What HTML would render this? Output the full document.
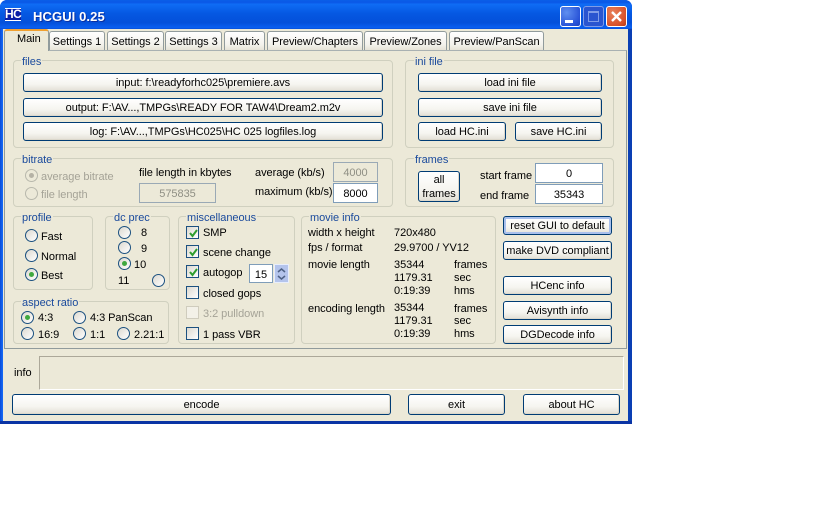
<!DOCTYPE html>
<html><head><meta charset="utf-8"><style>
html,body{margin:0;padding:0;width:840px;height:525px;background:#fff;overflow:hidden}
body{font-family:"Liberation Sans",sans-serif;font-size:11px;letter-spacing:-.05px;color:#000;position:relative}
div,span{position:absolute;box-sizing:border-box}
.t{line-height:16px;white-space:nowrap;height:14px}
.g{border:1px solid #d0d0bf;border-radius:4px}
.l{line-height:15px;height:14px;color:#1a4a9c;background:#ece9d8;padding:0 1px;white-space:nowrap}
.b{border:1px solid #003c74;border-radius:3px;background:linear-gradient(#fff,#f6f5f0 60%,#e2dfd5);text-align:center;white-space:nowrap;line-height:19px;box-shadow:inset -1px -1px 0 #dcd8cc}
.e{border:1px solid #7f9db9;background:#fff;text-align:center;line-height:20px}
.d{background:#ece9d8;color:#8f8f84;border-color:#9aa9b5}
.r{width:13px;height:13px;border-radius:50%;border:1px solid #1c5180;background:linear-gradient(135deg,#dcd9d0,#fff)}
.r.on:after{content:"";position:absolute;left:3px;top:3px;width:5px;height:5px;border-radius:50%;background:#3fa83f}
.r.off{border-color:#b8b8ac;background:#ece9d8}
.r.off.on:after{background:#b5b2a5}
.c{width:13px;height:13px;border:1px solid #1c5180;background:linear-gradient(135deg,#dcd9d0,#fff)}
.c svg{position:absolute;left:1px;top:1px}
.c.off{border-color:#cfccbd;background:#f3f1e8}
.tab{border:1px solid #919b9c;border-bottom:none;border-radius:3px 3px 0 0;background:linear-gradient(#fff,#f3f2ec 70%,#e6e3d6);text-align:center;top:31px;height:19px;line-height:20px;white-space:nowrap}
.dis{color:#a5a397}
</style></head><body>
<!-- window -->
<div style="left:0;top:0;width:632px;height:424px;background:#0831d9;border-radius:7px 7px 0 0"></div>
<div style="left:0;top:0;width:632px;height:30px;border-radius:7px 7px 0 0;background:linear-gradient(#0a5ee8,#0a58e6 8%,#0f6cf5 14%,#0558e2 45%,#0450da 75%,#0a5ff0 92%,#0644c8)"></div>
<div style="left:0;top:29px;width:3px;height:395px;background:linear-gradient(90deg,#0a4bd8,#166cf8)"></div>
<div style="left:628px;top:29px;width:4px;height:395px;background:#0a3fb4"></div>
<div style="left:0;top:421px;width:632px;height:3px;background:#0a34a4"></div>
<div style="left:3px;top:29px;width:625px;height:392px;background:#ece9d8"></div>
<!-- title -->
<div style="left:5px;top:8px;width:16px;height:13px;background:#0a1ea8;border-top:1px solid #fff;border-bottom:1px solid #fff;color:#fff;font:bold 12px/11px 'Liberation Sans',sans-serif;text-align:center;letter-spacing:-.5px">HC</div>
<div class="t" style="left:33px;top:9px;height:16px;line-height:16px;color:#fff;font-weight:bold;font-size:13px;letter-spacing:.1px;text-shadow:1px 1px 0 #0a2fa0">HCGUI 0.25</div>
<div style="left:560px;top:6px;width:21px;height:21px;border:1px solid #fff;border-radius:3px;background:radial-gradient(circle at 30% 30%,#5f8ff0,#2a55d8 70%,#1d42c0)"><span style="left:4px;top:13px;width:8px;height:3px;background:#fff"></span></div>
<div style="left:583px;top:6px;width:21px;height:21px;border:1px solid #7f9ce8;border-radius:3px;background:#2a55d0"><span style="left:4px;top:4px;width:11px;height:11px;border:1px solid #7f9ce8;border-top-width:2px"></span></div>
<div style="left:606px;top:6px;width:21px;height:21px;border:1px solid #fff;border-radius:3px;background:radial-gradient(circle at 30% 30%,#e8805a,#d8522a 70%,#b83a18)"><svg width="19" height="19" style="position:absolute;left:0;top:0"><path d="M5 5L14 14M14 5L5 14" stroke="#fff" stroke-width="2.4"/></svg></div>
<!-- tab panel -->
<div style="left:4px;top:50px;width:623px;height:299px;border:1px solid #919b9c;border-top-color:#a9b1b2;background:#ece9d8"></div>
<div class="tab" style="left:49px;width:56px">Settings 1</div>
<div class="tab" style="left:107px;width:57px">Settings 2</div>
<div class="tab" style="left:165px;width:57px">Settings 3</div>
<div class="tab" style="left:224px;width:41px">Matrix</div>
<div class="tab" style="left:267px;width:96px">Preview/Chapters</div>
<div class="tab" style="left:364px;width:83px">Preview/Zones</div>
<div class="tab" style="left:449px;width:95px">Preview/PanScan</div>
<div style="left:4px;top:29px;width:45px;height:22px;border:1px solid #919b9c;border-bottom:none;border-top:2px solid #f0a030;border-radius:3px 3px 0 0;background:#ece9d8"></div>
<div class="t" style="left:17px;top:31px">Main</div>
<!-- files -->
<div class="g" style="left:13px;top:60px;width:380px;height:88px"></div><div class="l" style="left:21px;top:55px">files</div>
<div class="b" style="left:23px;top:73px;width:360px;height:19px">input: f:\readyforhc025\premiere.avs</div>
<div class="b" style="left:23px;top:98px;width:360px;height:19px">output: F:\AV...,TMPGs\READY FOR TAW4\Dream2.m2v</div>
<div class="b" style="left:23px;top:122px;width:360px;height:19px">log: F:\AV...,TMPGs\HC025\HC 025 logfiles.log</div>
<!-- ini -->
<div class="g" style="left:405px;top:60px;width:209px;height:88px"></div><div class="l" style="left:414px;top:55px">ini file</div>
<div class="b" style="left:418px;top:73px;width:184px;height:19px">load ini file</div>
<div class="b" style="left:418px;top:98px;width:184px;height:19px">save ini file</div>
<div class="b" style="left:418px;top:122px;width:88px;height:19px">load HC.ini</div>
<div class="b" style="left:515px;top:122px;width:87px;height:19px">save HC.ini</div>
<!-- bitrate -->
<div class="g" style="left:13px;top:158px;width:380px;height:49px"></div><div class="l" style="left:21px;top:153px">bitrate</div>
<div class="r off on" style="left:25px;top:169px"></div><div class="t dis" style="left:41px;top:169px">average bitrate</div>
<div class="r off" style="left:25px;top:187px"></div><div class="t dis" style="left:41px;top:187px">file length</div>
<div class="t" style="left:139px;top:165px">file length in kbytes</div>
<div class="e d" style="left:139px;top:183px;width:77px;height:20px">575835</div>
<div class="t" style="left:255px;top:165px">average (kb/s)</div>
<div class="t" style="left:255px;top:184px">maximum (kb/s)</div>
<div class="e d" style="left:333px;top:162px;width:45px;height:20px">4000</div>
<div class="e" style="left:333px;top:183px;width:45px;height:20px">8000</div>
<!-- frames -->
<div class="g" style="left:405px;top:158px;width:209px;height:49px"></div><div class="l" style="left:414px;top:153px">frames</div>
<div class="b" style="left:418px;top:171px;width:42px;height:31px;white-space:normal;line-height:14px;padding-top:1px">all<br>frames</div>
<div class="t" style="left:480px;top:168px">start frame</div>
<div class="t" style="left:480px;top:188px">end frame</div>
<div class="e" style="left:535px;top:163px;width:68px;height:20px">0</div>
<div class="e" style="left:535px;top:184px;width:68px;height:20px">35343</div>
<!-- profile -->
<div class="g" style="left:13px;top:216px;width:80px;height:74px"></div><div class="l" style="left:21px;top:211px">profile</div>
<div class="r" style="left:25px;top:229px"></div><div class="t" style="left:41px;top:229px">Fast</div>
<div class="r" style="left:25px;top:249px"></div><div class="t" style="left:41px;top:249px">Normal</div>
<div class="r on" style="left:25px;top:268px"></div><div class="t" style="left:41px;top:268px">Best</div>
<!-- dc prec -->
<div class="g" style="left:105px;top:216px;width:65px;height:74px"></div><div class="l" style="left:113px;top:211px">dc prec</div>
<div class="r" style="left:118px;top:226px"></div><div class="t" style="left:141px;top:225px">8</div>
<div class="r" style="left:118px;top:241px"></div><div class="t" style="left:141px;top:241px">9</div>
<div class="r on" style="left:118px;top:257px"></div><div class="t" style="left:134px;top:257px">10</div>
<div class="t" style="left:118px;top:273px">11</div><div class="r" style="left:152px;top:274px"></div>
<!-- aspect -->
<div class="g" style="left:13px;top:301px;width:156px;height:43px"></div><div class="l" style="left:21px;top:296px">aspect ratio</div>
<div class="r on" style="left:21px;top:311px"></div><div class="t" style="left:38px;top:310px">4:3</div>
<div class="r" style="left:73px;top:311px"></div><div class="t" style="left:90px;top:310px">4:3 PanScan</div>
<div class="r" style="left:21px;top:327px"></div><div class="t" style="left:38px;top:327px">16:9</div>
<div class="r" style="left:73px;top:327px"></div><div class="t" style="left:90px;top:327px">1:1</div>
<div class="r" style="left:117px;top:327px"></div><div class="t" style="left:134px;top:327px">2.21:1</div>
<!-- misc -->
<div class="g" style="left:178px;top:216px;width:117px;height:128px"></div><div class="l" style="left:186px;top:211px">miscellaneous</div>
<div class="c" style="left:186px;top:226px"><svg width="11" height="11"><path d="M2 5L4.500 8L9 2" fill="none" stroke="#2f9e2f" stroke-width="2"/></svg></div><div class="t" style="left:203px;top:225px">SMP</div>
<div class="c" style="left:186px;top:245px"><svg width="11" height="11"><path d="M2 5L4.500 8L9 2" fill="none" stroke="#2f9e2f" stroke-width="2"/></svg></div><div class="t" style="left:203px;top:245px">scene change</div>
<div class="c" style="left:186px;top:265px"><svg width="11" height="11"><path d="M2 5L4.500 8L9 2" fill="none" stroke="#2f9e2f" stroke-width="2"/></svg></div><div class="t" style="left:203px;top:265px">autogop</div>
<div class="e" style="left:249px;top:264px;width:24px;height:19px">15</div>
<div style="left:274px;top:264px;width:15px;height:19px;background:#b4c4ec;border:1px solid #e8eefc"><svg width="13" height="17" style="position:absolute;left:0;top:0"><path d="M3 7L6.500 4L10 7M3 11L6.500 14L10 11" fill="none" stroke="#4d6185" stroke-width="1.500"/></svg></div>
<div class="c" style="left:186px;top:286px"></div><div class="t" style="left:203px;top:286px">closed gops</div>
<div class="c off" style="left:186px;top:306px"></div><div class="t dis" style="left:203px;top:306px">3:2 pulldown</div>
<div class="c" style="left:186px;top:327px"></div><div class="t" style="left:203px;top:327px">1 pass VBR</div>
<!-- movie info -->
<div class="g" style="left:301px;top:216px;width:195px;height:128px"></div><div class="l" style="left:309px;top:211px">movie info</div>
<div class="t" style="left:308px;top:225px">width x height</div><div class="t" style="left:394px;top:225px">720x480</div>
<div class="t" style="left:308px;top:240px">fps / format</div><div class="t" style="left:394px;top:240px">29.9700 / YV12</div>
<div class="t" style="left:308px;top:257px">movie length</div><div class="t" style="left:394px;top:257px">35344</div><div class="t" style="left:454px;top:257px">frames</div>
<div class="t" style="left:394px;top:270px">1179.31</div><div class="t" style="left:454px;top:270px">sec</div>
<div class="t" style="left:394px;top:283px">0:19:39</div><div class="t" style="left:454px;top:283px">hms</div>
<div class="t" style="left:308px;top:301px">encoding length</div><div class="t" style="left:394px;top:300px">35344</div><div class="t" style="left:454px;top:301px">frames</div>
<div class="t" style="left:394px;top:313px">1179.31</div><div class="t" style="left:454px;top:313px">sec</div>
<div class="t" style="left:394px;top:326px">0:19:39</div><div class="t" style="left:454px;top:326px">hms</div>
<!-- right buttons -->
<div class="b" style="left:503px;top:216px;width:109px;height:19px;box-shadow:inset 0 0 0 2px #a9c0ec">reset GUI to default</div>
<div class="b" style="left:503px;top:241px;width:109px;height:19px">make DVD compliant</div>
<div class="b" style="left:503px;top:276px;width:109px;height:19px">HCenc info</div>
<div class="b" style="left:503px;top:301px;width:109px;height:19px">Avisynth info</div>
<div class="b" style="left:503px;top:325px;width:109px;height:19px">DGDecode info</div>
<!-- info -->
<div class="t" style="left:14px;top:365px">info</div>
<div style="left:39px;top:356px;width:585px;height:34px;border:1px solid;border-color:#aca899 #fff #fff #aca899"></div>
<div class="b" style="left:12px;top:394px;width:379px;height:21px;line-height:21px">encode</div>
<div class="b" style="left:408px;top:394px;width:97px;height:21px;line-height:21px">exit</div>
<div class="b" style="left:523px;top:394px;width:97px;height:21px;line-height:21px">about HC</div>
</body></html>
